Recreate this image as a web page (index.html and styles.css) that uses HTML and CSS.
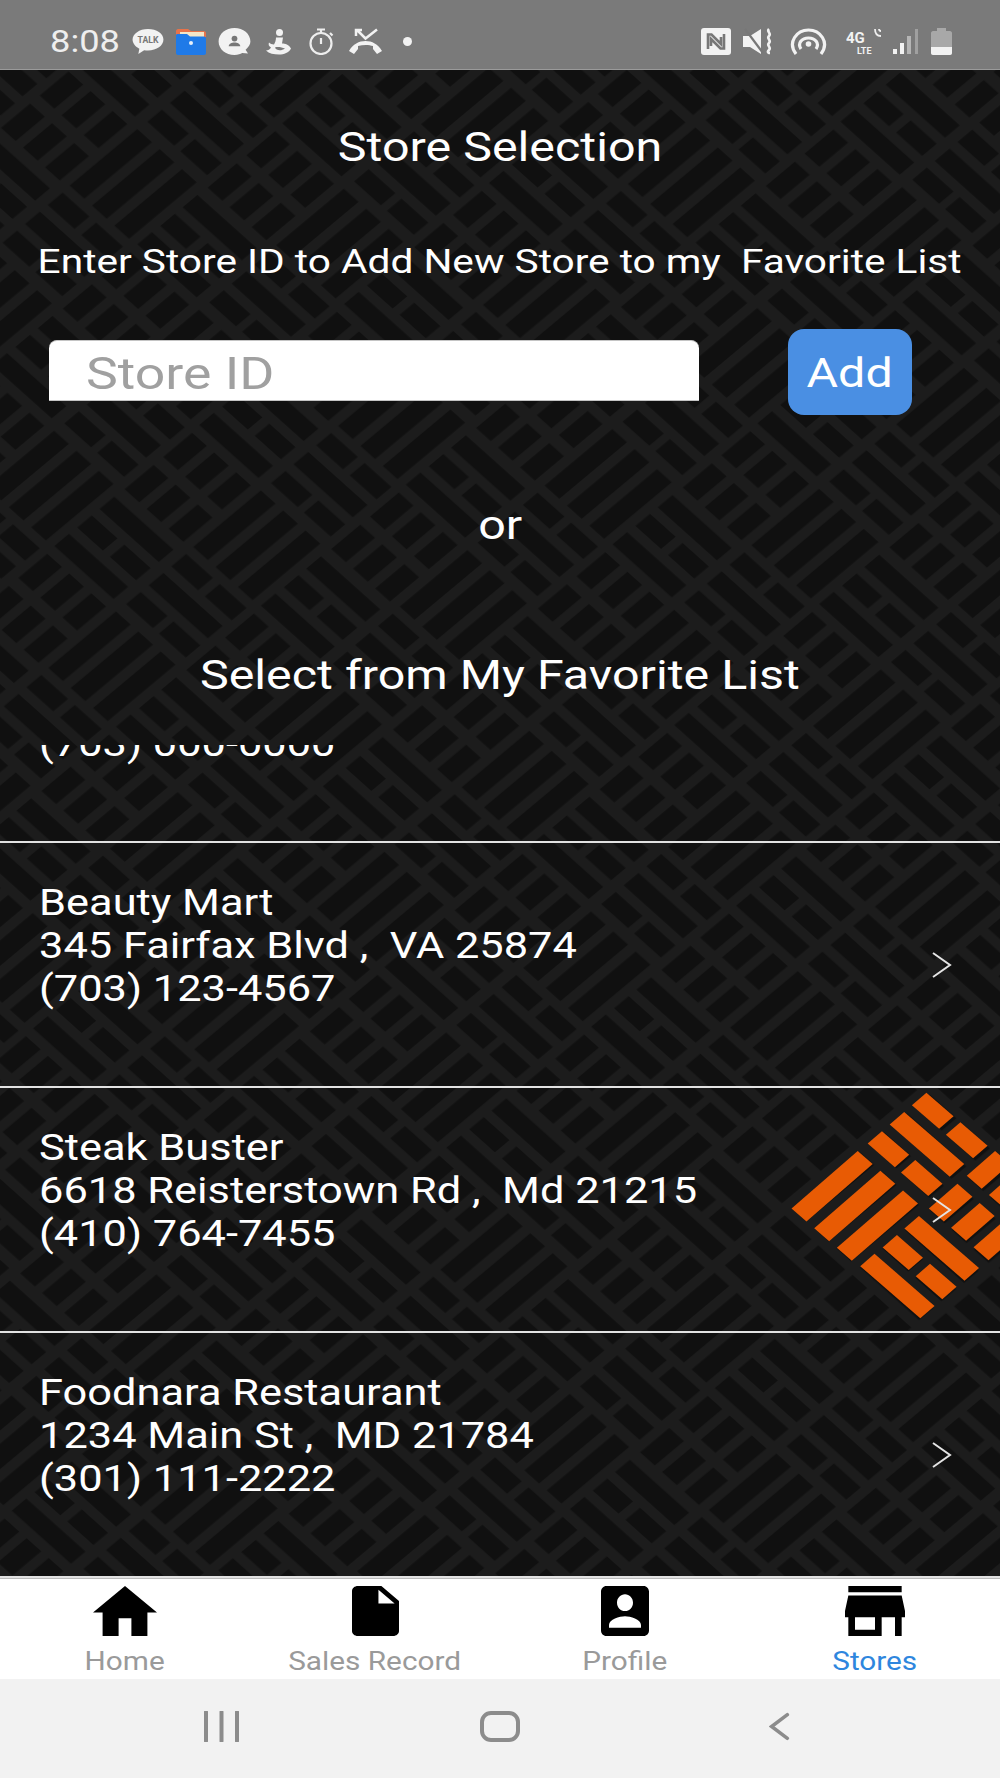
FILE: index.html
```html
<!DOCTYPE html>
<html>
<head>
    <title>Store Selection</title>
    <link rel="stylesheet" href="styles.css">
</head>
<body>
    <!-- background weave, same lattice for the pattern and the logo -->
    <svg class="weave" width="1000" height="1778">
        <defs>
            <g id="weave-cols" fill="#101010">
                <rect x="0.14" y="0.17" width="0.66" height="2.92"/>
                <rect x="1.14" y="0.17" width="0.66" height="2.92"/>
                <rect x="2.14" y="0.17" width="0.66" height="2.92"/>
                <rect x="0.17" y="3.5" width="1.2" height="0.63"/>
                <rect x="1.64" y="3.5" width="1.2" height="0.63"/>
                <rect x="0.17" y="4.47" width="2.65" height="0.64"/>
                <rect x="0.17" y="5.45" width="1.2" height="0.64"/>
                <rect x="1.67" y="5.45" width="1.2" height="0.64"/>
                <rect x="3.12" y="0.22" width="2.65" height="0.63"/>
                <rect x="3.14" y="1.19" width="1.15" height="0.63"/>
                <rect x="4.6" y="1.19" width="1.17" height="0.63"/>
                <rect x="3.14" y="2.15" width="2.65" height="0.64"/>
                <rect x="3.17" y="3.2" width="0.66" height="1.26"/>
                <rect x="4.15" y="3.2" width="0.66" height="1.26"/>
                <rect x="5.14" y="3.2" width="0.66" height="1.26"/>
                <rect x="3.17" y="4.87" width="0.66" height="1.25"/>
                <rect x="4.15" y="4.87" width="0.66" height="1.25"/>
                <rect x="5.14" y="4.87" width="0.66" height="1.25"/>
            </g>
            <pattern id="tile" patternUnits="userSpaceOnUse" width="12" height="6.25" patternTransform="matrix(22.37 20.03 23.18 -19.36 784.7 1208.8)">
                <rect width="12" height="6.25" fill="#1c1c1c"/>
                <use href="#weave-cols"/>
                <use href="#weave-cols" x="6" y="3.125"/>
                <use href="#weave-cols" x="6" y="-3.125"/>
            </pattern>
        </defs>
        <rect width="1000" height="1778" fill="url(#tile)"/>
        <g fill="#e85b04" transform="matrix(22.67 19.67 22.67 -19.67 760 1060)">
            <rect x="4.47" y="-3.08" width="0.66" height="2.92"/>
            <rect x="5.47" y="-3.08" width="0.66" height="2.92"/>
            <rect x="6.47" y="-3.08" width="0.66" height="2.92"/>
            <rect x="4.5" y="0.25" width="1.2" height="0.63"/>
            <rect x="5.97" y="0.25" width="1.2" height="0.63"/>
            <rect x="4.5" y="1.22" width="2.65" height="0.64"/>
            <rect x="4.5" y="2.2" width="1.2" height="0.64"/>
            <rect x="6" y="2.2" width="1.2" height="0.64"/>
            <rect x="7.45" y="-3.03" width="2.65" height="0.63"/>
            <rect x="7.47" y="-2.06" width="1.15" height="0.63"/>
            <rect x="8.93" y="-2.06" width="1.17" height="0.63"/>
            <rect x="7.47" y="-1.1" width="2.65" height="0.64"/>
            <rect x="7.5" y="-0.05" width="0.66" height="1.26"/>
            <rect x="8.48" y="-0.05" width="0.66" height="1.26"/>
            <rect x="9.47" y="-0.05" width="0.66" height="1.26"/>
            <rect x="7.5" y="1.62" width="0.66" height="1.25"/>
            <rect x="8.48" y="1.62" width="0.66" height="1.25"/>
        </g>
    </svg>

    <div class="screen">
        <div class="status-bar">
            <div class="status-left">
                <span class="clock">8:08</span>
                <svg class="ic-talk" viewBox="0 0 34 28">
                    <path d="M17 1C8 1 1 6 1 12c0 4 3 7.500 7 9.500l-1 5.500 6-4c1.300.2 2.700.3 4 .3 9 0 16-4.800 16-11.300S26 1 17 1z" fill="#f2f2f2"/>
                    <text x="17" y="16" class="talk-text">TALK</text>
                </svg>
                <svg class="ic-folder" viewBox="0 0 32 27">
                    <path d="M1 3c0-1 1-2 2-2h10l3 2h13c1 0 2 1 2 2v4H1z" fill="#e8734a"/>
                    <path d="M5 4h24v6H5z" fill="#f4e6c8"/>
                    <path d="M1 7c0-1 1-1 2-1h9l3 2.500h14c1 0 2 1 2 2V25c0 1-1 2-2 2H3c-1 0-2-1-2-2z" fill="#1f7ae8"/>
                    <circle cx="16" cy="15" r="2" fill="#e8f0fa"/>
                </svg>
                <svg class="ic-contact" viewBox="0 0 33 28">
                    <path d="M16.500 0C7.500 0 0 6 0 14s7.500 14 16.500 14c4 0 6-1 8-2l6 .5-2.500-4c3-2.500 5-5.500 5-8.500C33 6 25.500 0 16.500 0z" fill="#f2f2f2"/>
                    <circle cx="16.500" cy="11" r="3" fill="#777"/>
                    <path d="M10.500 19c0-2.500 3-4 6-4s6 1.500 6 4z" fill="#777"/>
                </svg>
                <svg class="ic-goose" viewBox="0 0 25 26">
                    <circle cx="13.500" cy="4" r="3.500" fill="#f2f2f2"/>
                    <path d="M10 9h7l-1 6c3 0 7 1 9 5-2 4-7 6-12 6-5 0-10-1-13-4 2 0 4-1 5-3-2-1-3-3-2-5 1 1 3 2 5 2 1-2 2-4 2-7zM9 19c1 3 6 4 10 1-3-1-7-2-10-1z" fill="#f2f2f2"/>
                </svg>
                <svg class="ic-watch" viewBox="0 0 27 27" fill="none" stroke="#eeeeee" stroke-width="2.200">
                    <circle cx="13" cy="15.500" r="10.500"/>
                    <path d="M9 1.500h8M13 2v3M13 10v6M22 5l2.500 2.500"/>
                </svg>
                <svg class="ic-call" viewBox="0 0 35 27">
                    <path d="M1 23c4-7 10-10 16.500-10S30 16 34 23l-5 3-4-5v-3c-4-1.500-10-1.500-15 0v3l-4 5z" fill="#f2f2f2"/>
                    <path d="M9 2l8.500 8.500L29 1.500M8 8V2h6" fill="none" stroke="#f2f2f2" stroke-width="2.500"/>
                </svg>
                <span class="dot"></span>
            </div>
            <div class="status-right">
                <svg class="ic-nfc" viewBox="0 0 30 27">
                    <rect width="30" height="27" rx="3" fill="#f2f2f2"/>
                    <path d="M7 21V6.500h3.500L20 16V9M23 6v14.500h-3.500L10 11v7" fill="none" stroke="#777" stroke-width="2.600"/>
                </svg>
                <svg class="ic-mute" viewBox="0 0 30 27">
                    <path d="M0 8h7l11-7v25l-11-7H0z" fill="#f2f2f2"/>
                    <path d="M2 1l18 24" stroke="#777" stroke-width="2.200"/>
                    <path d="M26 1c-3 3 3 4 0 7s3 4 0 7 3 4 0 7 1 3 1 3" fill="none" stroke="#f2f2f2" stroke-width="2.600"/>
                </svg>
                <svg class="ic-hotspot" viewBox="0 0 37 27" fill="none" stroke="#f2f2f2" stroke-width="3.200">
                    <path d="M6 26C-3 14 7 2 18.500 2S40 14 31 26"/>
                    <path d="M11 21c-4-6 1-11 7.500-11S30 15 26 21"/>
                    <circle cx="18.500" cy="16" r="2.800" fill="#f2f2f2" stroke="none"/>
                </svg>
                <svg class="ic-lte" viewBox="0 0 37 27">
                    <text x="0" y="15" class="lte-big">4G</text>
                    <text x="11" y="26" class="lte-small">LTE</text>
                    <path d="M29 1c0 4 2 7 6 7M33 1c0 1 .5 2 2 2" fill="none" stroke="#eeeeee" stroke-width="1.800"/>
                </svg>
                <svg class="ic-signal" viewBox="0 0 26 27">
                    <rect x="0" y="21" width="4" height="5" fill="#f2f2f2"/>
                    <rect x="7" y="15" width="4" height="11" fill="#f2f2f2"/>
                    <rect x="14" y="8" width="4" height="18" fill="#b5b5b5"/>
                    <rect x="22" y="1" width="3" height="25" fill="#a0a0a0"/>
                </svg>
                <svg class="ic-battery" viewBox="0 0 21 27">
                    <path d="M6 0h9v3h4c1 0 2 1 2 2v20c0 1-1 2-2 2H2c-1 0-2-1-2-2V5c0-1 1-2 2-2h4z" fill="#a8a8a8"/>
                    <path d="M0 19h21v6c0 1-1 2-2 2H2c-1 0-2-1-2-2z" fill="#f2f2f2"/>
                </svg>
            </div>
        </div>

        <div class="content">
            <h1 class="title wide">Store Selection</h1>
            <p class="subtitle wide">Enter Store ID to Add New Store to my&nbsp; Favorite List</p>
            <div class="add-row">
                <div class="input-box">
                    <input class="store-input" type="text" placeholder="Store ID">
                </div>
                <button class="add-button"><span class="wide">Add</span></button>
            </div>
            <p class="or wide">or</p>
            <p class="select-label wide">Select from My Favorite List</p>

            <ul class="store-list">
                <li class="store-row first-row">
                    <div class="store-info">
                        <div>(703) 000-0000</div>
                    </div>
                </li>
                <li class="store-row">
                    <div class="store-info">
                        <div>Beauty Mart</div>
                        <div>345 Fairfax Blvd ,&nbsp; VA 25874</div>
                        <div>(703) 123-4567</div>
                    </div>
                    <svg class="chevron" viewBox="0 0 20 26"><path d="M1 1l17 12L1 25" fill="none" stroke="#e4e4e4" stroke-width="2"/></svg>
                </li>
                <li class="store-row">
                    <div class="store-info">
                        <div>Steak Buster</div>
                        <div>6618 Reisterstown Rd ,&nbsp; Md 21215</div>
                        <div>(410) 764-7455</div>
                    </div>
                    <svg class="chevron" viewBox="0 0 20 26"><path d="M1 1l17 12L1 25" fill="none" stroke="#e4e4e4" stroke-width="2"/></svg>
                </li>
                <li class="store-row">
                    <div class="store-info">
                        <div>Foodnara Restaurant</div>
                        <div>1234 Main St ,&nbsp; MD 21784</div>
                        <div>(301) 111-2222</div>
                    </div>
                    <svg class="chevron" viewBox="0 0 20 26"><path d="M1 1l17 12L1 25" fill="none" stroke="#e4e4e4" stroke-width="2"/></svg>
                </li>
            </ul>
        </div>

        <div class="tab-bar">
            <div class="tab">
                <svg class="tab-home" viewBox="2 3 20 17" preserveAspectRatio="none"><path d="M10 20v-6h4v6h5v-8h3L12 3 2 12h3v8z"/></svg>
                <span class="wide">Home</span>
            </div>
            <div class="tab">
                <svg class="tab-file" viewBox="4 2 16 20" preserveAspectRatio="none"><path d="M6 2c-1.100 0-2 .9-2 2v16c0 1.100.9 2 2 2h12c1.100 0 2-.9 2-2V8l-6-6H6zm7 7V3.500L18.500 9H13z"/></svg>
                <span class="wide">Sales Record</span>
            </div>
            <div class="tab">
                <svg class="tab-profile" viewBox="3 3 18 18" preserveAspectRatio="none"><path d="M3 5v14c0 1.100.89 2 2 2h14c1.100 0 2-.9 2-2V5c0-1.100-.9-2-2-2H5c-1.110 0-2 .9-2 2zm12 4c0 1.660-1.340 3-3 3s-3-1.340-3-3 1.340-3 3-3 3 1.340 3 3zm-9 8c0-2 4-3.100 6-3.100s6 1.100 6 3.100v1H6v-1z"/></svg>
                <span class="wide">Profile</span>
            </div>
            <div class="tab active">
                <svg class="tab-store" viewBox="3 4 18 16" preserveAspectRatio="none"><path d="M20 4H4v2h16V4zm1 10v-2l-1-5H4l-1 5v2h1v6h10v-6h4v6h2v-6h1zm-9 4H6v-4h6v4z"/></svg>
                <span class="wide">Stores</span>
            </div>
        </div>

        <div class="system-nav">
            <svg class="sys-recents" viewBox="0 0 37 31"><path d="M3 1v29M18.500 1v29M34 1v29" stroke="#8c8c8c" stroke-width="4" stroke-linecap="round"/></svg>
            <svg class="sys-home" viewBox="0 0 40 31"><rect x="2" y="2" width="36" height="27" rx="9" fill="none" stroke="#8c8c8c" stroke-width="4"/></svg>
            <svg class="sys-back" viewBox="0 0 24 31"><path d="M21 2L3 15.500 21 29" fill="none" stroke="#8c8c8c" stroke-width="4" stroke-linecap="round"/></svg>
        </div>
    </div>
</body>
</html>
```

FILE: styles.css
```css
* {
    box-sizing: border-box;
}
body {
    margin: 0;
    background-color: #101010;
    font-family: Roboto, "Liberation Sans", sans-serif;
}
.weave {
    position: absolute;
    top: 0;
    left: 0;
    display: block;
}
.screen {
    position: relative;
    display: flex;
    flex-direction: column;
    width: 1000px;
    height: 1778px;
    overflow: hidden;
}
/* the whole screenshot is stretched sideways */
.wide {
    display: inline-block;
    transform: scaleX(1.21);
}

/* status bar */
.status-bar {
    display: flex;
    justify-content: space-between;
    align-items: center;
    height: 70px;
    padding: 14px 48px 0 50px;
    background-color: #7a7a7a;
    border-bottom: 1px solid #9a9a9a;
}
.status-left, .status-right {
    display: flex;
    align-items: center;
    height: 28px;
}
.status-bar svg {
    height: 27px;
    display: block;
}
.clock {
    width: 67px;
    color: #eeeeee;
    font-size: 31px;
    line-height: 28px;
    transform: scaleX(1.17);
    transform-origin: left;
}
.talk-text {
    font-size: 9px;
    font-weight: bold;
    fill: #777;
    text-anchor: middle;
}
.lte-big {
    font-size: 15px;
    font-weight: bold;
    fill: #f2f2f2;
}
.lte-small {
    font-size: 9px;
    font-weight: bold;
    fill: #f2f2f2;
}
.ic-talk { width: 34px; margin-left: 14px; }
.ic-folder { width: 32px; margin-left: 10px; }
.ic-contact { width: 33px; margin-left: 11px; }
.ic-goose { width: 25px; margin-left: 15px; }
.ic-watch { width: 27px; margin-left: 17px; }
.ic-call { width: 35px; margin-left: 13px; }
.dot {
    width: 9px;
    height: 9px;
    margin-left: 20px;
    border-radius: 50%;
    background-color: #f2f2f2;
}
.ic-nfc { width: 30px; }
.ic-mute { width: 30px; margin-left: 12px; }
.ic-hotspot { width: 37px; margin-left: 17px; }
.ic-lte { width: 37px; margin-left: 19px; }
.ic-signal { width: 26px; margin-left: 10px; }
.ic-battery { width: 21px; margin-left: 12px; }

/* main content */
.content {
    flex: 1;
    display: flex;
    flex-direction: column;
    min-height: 0;
    color: #fff;
}
.title {
    align-self: center;
    margin: 53px 0 0;
    font-size: 40px;
    font-weight: 400;
    line-height: 50px;
}
.subtitle {
    align-self: center;
    margin: 68px 0 0;
    font-size: 34px;
    line-height: 40px;
    white-space: nowrap;
    transform: scaleX(1.195);
}
.add-row {
    display: flex;
    align-items: flex-start;
    margin-top: 48px;
    padding-left: 49px;
}
.input-box {
    width: 650px;
    height: 61px;
    margin-top: 11px;
    padding: 6px 0 0 37px;
    border-radius: 8px 8px 0 0;
    border-top: 1px solid #c4c4c4;
    border-bottom: 1px solid #c4c4c4;
    background-color: #fff;
}
.store-input {
    display: block;
    width: 500px;
    height: 52px;
    padding: 0;
    border: none;
    outline: none;
    background: transparent;
    font-family: Roboto, "Liberation Sans", sans-serif;
    font-size: 45px;
    transform: scaleX(1.19);
    transform-origin: left;
}
.store-input::placeholder {
    color: #a0a0a0;
    opacity: 1;
}
.add-button {
    width: 124px;
    height: 86px;
    margin-left: 89px;
    padding: 2px 0 0;
    border: none;
    border-radius: 16px;
    background-color: #4a8fe3;
    color: #fff;
    font-family: Roboto, "Liberation Sans", sans-serif;
    font-size: 40px;
}
.or {
    align-self: center;
    margin: 86px 0 0;
    font-size: 40px;
    line-height: 50px;
}
.select-label {
    align-self: center;
    margin: 100px 0 0;
    font-size: 40px;
    line-height: 50px;
}

/* store list, scrolled so the first row is cut off */
.store-list {
    flex: 1;
    min-height: 0;
    margin: 44px 0 0;
    padding: 0;
    overflow: hidden;
    list-style-type: none;
}
.store-row {
    display: flex;
    justify-content: space-between;
    align-items: center;
    height: 245px;
    padding: 0 48px 0 39px;
    border-bottom: 2px solid #e2e2e2;
}
.first-row {
    margin-top: -147px;
}
.store-info {
    align-self: flex-start;
    padding-top: 39px;
    font-size: 36px;
    line-height: 43px;
    white-space: nowrap;
    transform: scaleX(1.205);
    transform-origin: left;
}
.first-row .store-info {
    padding-top: 125px;
}
.chevron {
    width: 20px;
    height: 26px;
}

/* bottom tabs */
.tab-bar {
    display: grid;
    grid-template-columns: repeat(4, 250px);
    height: 101px;
    background-color: #fff;
    border-top: 1px solid #bbbbbb;
}
.tab {
    display: flex;
    flex-direction: column;
    align-items: center;
    height: 100px;
    color: #9a9a9a;
    font-size: 25px;
}
.tab svg {
    display: block;
    height: 50px;
    margin-top: 7px;
}
.tab span {
    margin-top: 11px;
    line-height: 30px;
    transform: scaleX(1.19);
}
.tab-home { width: 64px; }
.tab-file { width: 47px; }
.tab-profile { width: 48px; }
.tab-store { width: 60px; }
.active {
    color: #2e86de;
}

/* android nav buttons */
.system-nav {
    display: grid;
    grid-template-columns: repeat(3, 279px);
    justify-content: center;
    justify-items: center;
    align-items: center;
    height: 99px;
    padding-bottom: 4px;
    background-color: #f2f2f2;
}
.sys-recents { width: 37px; height: 31px; }
.sys-home { width: 40px; height: 31px; }
.sys-back { width: 21px; height: 31px; }
```
